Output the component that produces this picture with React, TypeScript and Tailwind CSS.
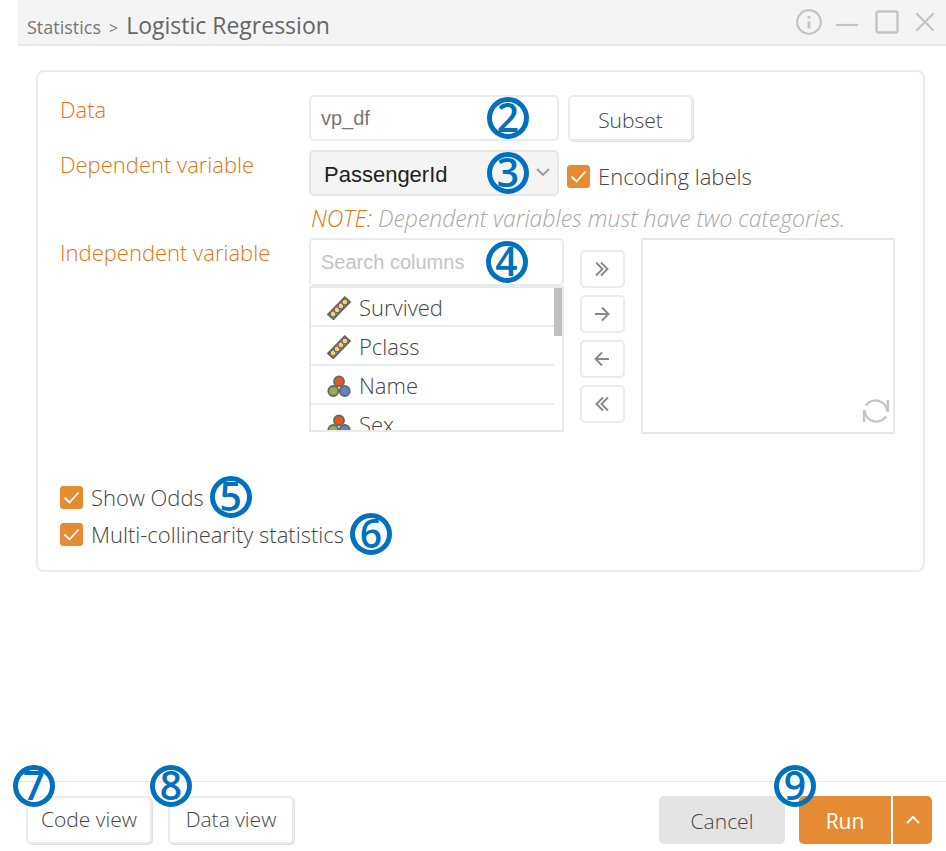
import React, { useState } from "react";

const font = "font-['Open_Sans','Noto_Sans',sans-serif]";
const arial = "font-['Liberation_Sans',Arial,sans-serif]";

function Step({ n, className = "" }: { n: number; className?: string }) {
  return (
    <span
      className={`pointer-events-none absolute z-10 flex size-[42px] items-center justify-center rounded-full border-[5px] border-[#0070c0] pb-1 text-[39px] leading-none font-semibold text-[#0070c0] ${className}`}
    >
      {n}
    </span>
  );
}

function Check({ label, step }: { label: string; step?: number }) {
  const [on, setOn] = useState(true);
  return (
    <label className="relative flex w-fit items-center gap-2 text-[22px] leading-9 font-light text-[#444]">
      <span className="relative flex size-[23px] shrink-0">
        <input
          type="checkbox"
          checked={on}
          onChange={(e) => setOn(e.target.checked)}
          className="peer size-full appearance-none rounded-[3px] border border-[#e58b33] bg-white checked:bg-[#e58b33]"
        />
        <svg
          viewBox="0 0 23 23"
          fill="none"
          stroke="white"
          strokeWidth="1.8"
          className="pointer-events-none absolute inset-0 hidden peer-checked:block"
        >
          <path d="M4.5 11.5 9.5 16.5 18.5 6.5" />
        </svg>
      </span>
      {label}
      {step && <Step n={step} className="top-1/2 left-full ml-1.5 -translate-y-1/2" />}
    </label>
  );
}

function RulerIcon() {
  return (
    <svg viewBox="0 0 24 24" className="size-6 shrink-0" fill="#ffd27a" stroke="#666" strokeWidth="1.8">
      <path d="M1 18.5 17.8 1.2 23 6 6.3 23.2Z" />
      <g strokeWidth="1.2">
        <circle cx="6.2" cy="17.9" r="2.9" />
        <circle cx="10.1" cy="13.9" r="2.9" />
        <circle cx="14" cy="9.9" r="2.9" />
        <circle cx="17.9" cy="6" r="2.9" />
      </g>
    </svg>
  );
}

function CategoryIcon() {
  return (
    <svg viewBox="0 0 24 24" className="size-6 shrink-0" stroke="#666" strokeWidth="1.8">
      <circle cx="6.3" cy="17" r="5" fill="#9bab4f" />
      <circle cx="17.7" cy="17" r="5" fill="#5b85cc" />
      <circle cx="12" cy="7.4" r="5" fill="#e05a24" />
    </svg>
  );
}

const columns = [
  { name: "Survived", numeric: true },
  { name: "Pclass", numeric: true },
  { name: "Name", numeric: false },
  { name: "Sex", numeric: false },
];

const moves = [
  { label: "Add all", d: "M4 3.5 10.5 10 4 16.5M9 3.5 15.5 10 9 16.5" },
  { label: "Add", d: "M3 10H16.5M10 3.5 16.5 10 10 16.5" },
  { label: "Remove", d: "M17 10H3.5M10 3.5 3.5 10 10 16.5" },
  { label: "Remove all", d: "M16 3.5 9.5 10 16 16.5M11 3.5 4.5 10 11 16.5" },
];

const outlined =
  "rounded-[5px] border-2 border-[#ebebeb] bg-white text-[21px] font-light text-[#444] shadow-[1px_1px_1px_#ddd]";
const rowLabel = "text-[22px] leading-7 font-light text-[#dd7510]";

export default function App() {
  return (
    <div className={`flex min-h-screen flex-col bg-white pl-[18px] ${font}`}>
      <header className="flex h-[46px] items-center justify-between border-b-2 border-[#e9e9e9] bg-[#f4f4f4] pr-[11px] pl-[9px]">
        <h1 className="flex items-baseline gap-2 pt-1.5 text-[23px] text-[#666]">
          <span className="text-[18px] text-[#777]">Statistics</span>
          <span className="text-[16px] text-[#777]">&gt;</span>
          Logistic Regression
        </h1>
        <div className="flex items-center text-[#c4c4c4]">
          <button aria-label="Information">
            <svg viewBox="0 0 28 28" className="size-7" fill="none" stroke="currentColor" strokeWidth="2.2">
              <circle cx="14" cy="14" r="11.8" />
              <path d="M14 13.2V20.5M14 8V10.6" strokeWidth="2.8" />
            </svg>
          </button>
          <button aria-label="Minimize" className="ml-3">
            <svg viewBox="0 0 24 28" className="h-7 w-6" stroke="currentColor" strokeWidth="2.2">
              <path d="M1 17H23" />
            </svg>
          </button>
          <button aria-label="Maximize" className="ml-4">
            <svg viewBox="0 0 24 24" className="size-6" fill="none" stroke="currentColor" strokeWidth="2.4">
              <rect x="1.5" y="1.5" width="21" height="21" rx="2" />
            </svg>
          </button>
          <button aria-label="Close" className="ml-4">
            <svg viewBox="0 0 20 20" className="size-5" fill="none" stroke="currentColor" strokeWidth="2.2" strokeLinecap="round">
              <path d="M2 2 18 18M18 2 2 18" />
            </svg>
          </button>
        </div>
      </header>

      <main className="flex-1 pt-6 pr-[21px] pb-6 pl-[18px]">
        <section className="rounded-lg border-2 border-[#ebebeb] px-[22px] pt-[23px] pb-[18px]">
          <div className="grid grid-cols-[249px_1fr] pr-1.5">
            <label htmlFor="data" className={rowLabel}>
              Data
            </label>
            <div className="flex gap-[9px]">
              <div className="relative w-[250px]">
                <input
                  id="data"
                  defaultValue="vp_df"
                  className={`h-[46px] w-full rounded-[5px] border-2 border-[#ebebeb] px-2.5 text-[20px] text-[#777] ${arial}`}
                />
                <Step n={2} className="top-0.5 right-[30px]" />
              </div>
              <button className={`h-[46px] w-[125px] pt-1.5 ${outlined}`}>Subset</button>
            </div>

            <label htmlFor="dependent" className={`mt-[9px] ${rowLabel}`}>
              Dependent variable
            </label>
            <div className="mt-[9px] flex items-center gap-2">
              <div className="relative w-[250px]">
                <select
                  id="dependent"
                  className={`h-[46px] w-full appearance-none rounded-[5px] border-2 border-[#e6e6e6] bg-[#f4f4f4] px-[13px] pt-0.5 text-[22px] text-[#222] ${arial}`}
                >
                  <option>PassengerId</option>
                </select>
                <svg viewBox="0 0 14 8" className="pointer-events-none absolute top-[18px] right-[9px] h-2 w-3.5" fill="none" stroke="#999" strokeWidth="1.8">
                  <path d="M1 1 7 7 13 1" />
                </svg>
                <Step n={3} className="top-0.5 right-[30px]" />
              </div>
              <div className="pt-1.5">
                <Check label="Encoding labels" />
              </div>
            </div>

            <p className="col-start-2 pt-1.5 pb-1 pl-0.5 text-[23px] leading-8 font-light text-[#a8a8a8] italic">
              <span className="text-[#dd7510]">NOTE:</span> Dependent variables must have two categories.
            </p>

            <label htmlFor="search" className={rowLabel}>
              Independent variable
            </label>
            <div className="grid grid-cols-[1fr_45px_1fr] gap-4">
              <div className="relative">
                <input
                  id="search"
                  placeholder="Search columns"
                  className={`block h-12 w-full rounded-[5px] border-2 border-[#ebebeb] px-2.5 text-[20px] placeholder:text-[#c4c4c4] ${arial}`}
                />
                <Step n={4} className="top-[3px] right-9" />
                <div className="flex h-[146px] overflow-hidden border-2 border-[#e9e9e9]">
                  <ul className="flex-1 text-[22px] font-light text-[#444]">
                    {columns.map((c) => (
                      <li key={c.name} className="flex h-[39px] items-center gap-2 border-b-2 border-[#ebebeb] pt-0.5 pl-4">
                        {c.numeric ? <RulerIcon /> : <CategoryIcon />}
                        {c.name}
                      </li>
                    ))}
                  </ul>
                  <div className="h-12 w-2 bg-[#c1c1c1]" />
                </div>
              </div>
              <div className="flex flex-col gap-[7px] pt-3">
                {moves.map((m) => (
                  <button
                    key={m.label}
                    aria-label={m.label}
                    className="flex h-[38px] items-center justify-center rounded-[5px] border-2 border-[#ebebeb] text-[#888]"
                  >
                    <svg viewBox="0 0 20 20" className="size-5" fill="none" stroke="currentColor" strokeWidth="1.9">
                      <path d={m.d} />
                    </svg>
                  </button>
                ))}
              </div>
              <div className="flex h-[196px] items-end justify-end border-2 border-[#e9e9e9] px-[3px] pb-[7px]">
                <button aria-label="Reset columns" className="text-[#c4c4c4]">
                  <svg viewBox="0 0 28 28" className="size-7" fill="none" stroke="currentColor" strokeWidth="2.4">
                    <path d="M4 8.5A11.8 11.8 0 0 1 25.4 14.5M26 3V15M24 19.5A11.8 11.8 0 0 1 2.6 13.5M2 25V13" />
                  </svg>
                </button>
              </div>
            </div>
          </div>

          <div className="mt-[45px] flex flex-col gap-px">
            <Check label="Show Odds" step={5} />
            <Check label="Multi-collinearity statistics" step={6} />
          </div>
        </section>
      </main>

      <footer className="flex items-center justify-between border-t border-[#e4e4e4] pt-3.5 pr-3.5 pb-[7px] pl-2">
        <div className="flex gap-4">
          <div className="relative">
            <button className={`h-12 w-[126px] ${outlined}`}>Code view</button>
            <Step n={7} className="-top-[31px] -left-[13px]" />
          </div>
          <div className="relative">
            <button className={`h-12 w-[126px] ${outlined}`}>Data view</button>
            <Step n={8} className="-top-[31px] -left-[18px]" />
          </div>
        </div>
        <div className="flex gap-3.5">
          <button className="h-12 w-[126px] rounded-[5px] bg-[#e4e4e4] pt-1 text-[21px] font-light text-[#444]">Cancel</button>
          <div className="relative flex gap-0.5">
            <button className="h-12 w-[92px] rounded-l-[5px] bg-[#e58b33] pt-1 text-[21px] text-white">Run</button>
            <button aria-label="More run options" className="flex h-12 w-[39px] items-center justify-center rounded-r-[5px] bg-[#e58b33]">
              <svg viewBox="0 0 14 8" className="h-2 w-3.5" fill="none" stroke="white" strokeWidth="2">
                <path d="M1 7 7 1 13 7" />
              </svg>
            </button>
            <Step n={9} className="-top-[31px] -left-[25px]" />
          </div>
        </div>
      </footer>
    </div>
  );
}
